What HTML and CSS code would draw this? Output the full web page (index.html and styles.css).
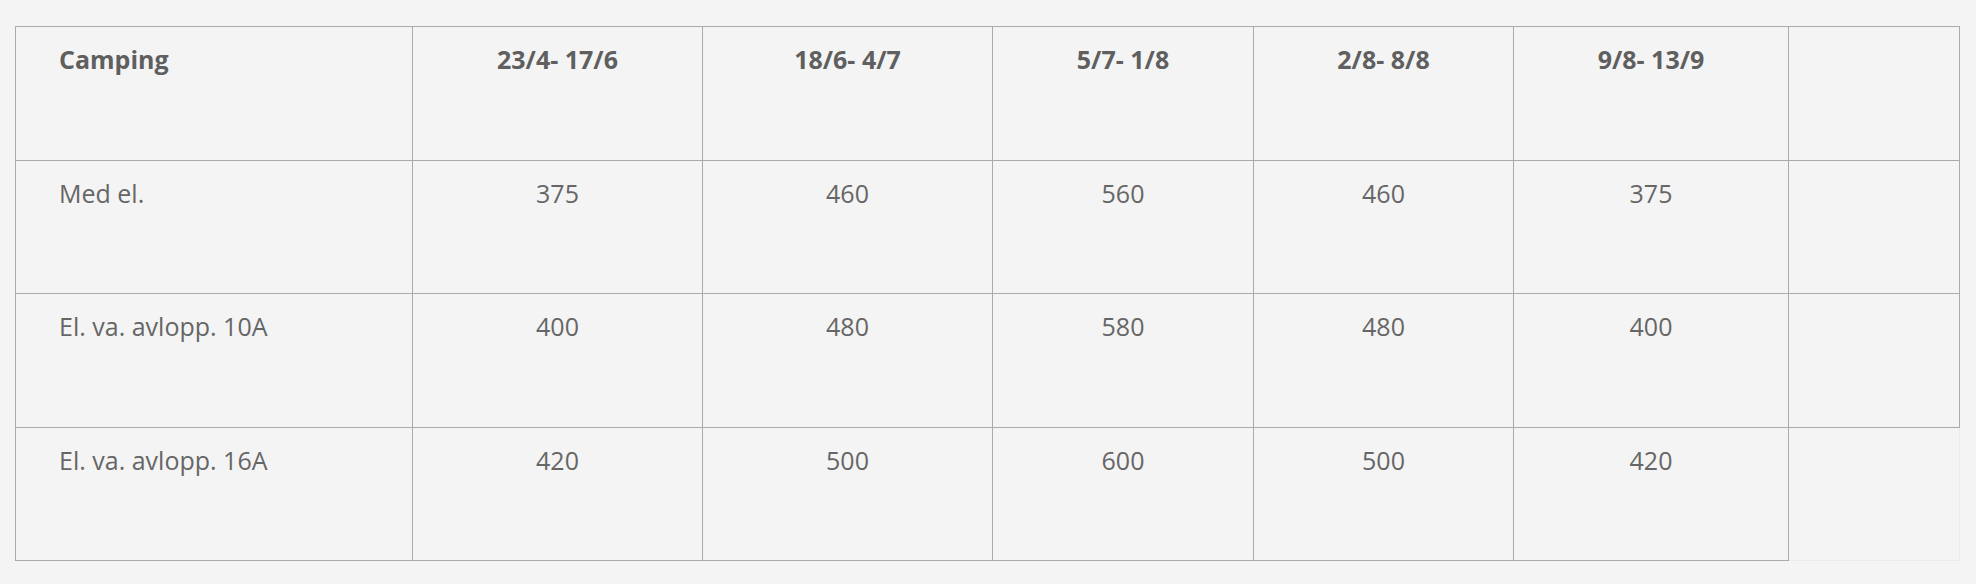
FILE: index.html
```html
<!DOCTYPE html>
<html lang="sv">
<head>
<meta charset="utf-8">
<title>Priser camping</title>
<link rel="stylesheet" href="styles.css">
</head>
<body>
<div class="wrap">
<table class="prices">
  <colgroup>
    <col class="c1"><col class="c2"><col class="c3"><col class="c4"><col class="c5"><col class="c6"><col class="c7">
  </colgroup>
  <tbody>
    <tr>
      <td class="label head">Camping</td>
      <td class="head">23/4- 17/6</td>
      <td class="head">18/6- 4/7</td>
      <td class="head">5/7- 1/8</td>
      <td class="head">2/8- 8/8</td>
      <td class="head">9/8- 13/9</td>
      <td></td>
    </tr>
    <tr>
      <td class="label">Med el.</td>
      <td>375</td>
      <td>460</td>
      <td>560</td>
      <td>460</td>
      <td>375</td>
      <td></td>
    </tr>
    <tr>
      <td class="label">El. va. avlopp. 10A</td>
      <td>400</td>
      <td>480</td>
      <td>580</td>
      <td>480</td>
      <td>400</td>
      <td></td>
    </tr>
    <tr>
      <td class="label">El. va. avlopp. 16A</td>
      <td>420</td>
      <td>500</td>
      <td>600</td>
      <td>500</td>
      <td>420</td>
    </tr>
  </tbody>
</table>
</div>
</body>
</html>
```

FILE: styles.css
```css
html, body {
  margin: 0;
  padding: 0;
  background: #f4f4f4;
}

.wrap {
  padding: 26px 18px 0 15px;
}

.prices {
  border-collapse: collapse;
  table-layout: fixed;
  width: 1944px;
  border: 1px solid #ebebeb;
  font-family: "Open Sans", "Liberation Sans", sans-serif;
  font-size: 25px;
  line-height: 1.5;
  color: #666;
}

.c1 { width: 397px; }
.c2 { width: 290px; }
.c3 { width: 290px; }
.c4 { width: 261px; }
.c5 { width: 260px; }
.c6 { width: 275px; }
.c7 { width: 171px; }

.prices tr {
  height: 133.6px;
}

.prices td {
  border: 1px solid #aaa;
  padding: 14px 43px;
  vertical-align: top;
  text-align: center;
}

.prices td.label {
  text-align: left;
}

.prices td.head {
  font-weight: 700;
  color: #5f5f5f;
}
```
